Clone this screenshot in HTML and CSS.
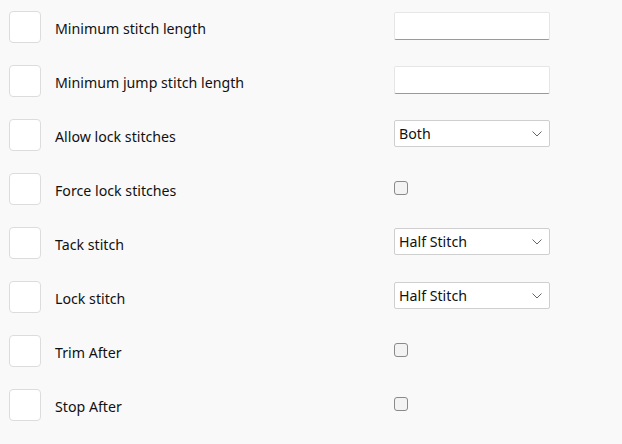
FILE: index.html
```html
<!DOCTYPE html>
<html>
<head>
<meta charset="utf-8">
<link rel="stylesheet" href="styles.css">
</head>
<body>
<div class="form">
  <div class="row">
    <span class="swatch"></span><span class="label">Minimum stitch length</span>
    <span class="field"></span>
  </div>
  <div class="row">
    <span class="swatch"></span><span class="label">Minimum jump stitch length</span>
    <span class="field"></span>
  </div>
  <div class="row">
    <span class="swatch"></span><span class="label">Allow lock stitches</span>
    <span class="select"><span class="value">Both</span><svg class="chev" width="10" height="6" viewBox="0 0 10 6"><path d="M0.5 0.5 L5 5 L9.5 0.5" fill="none" stroke="#666" stroke-width="1"/></svg></span>
  </div>
  <div class="row">
    <span class="swatch"></span><span class="label">Force lock stitches</span>
    <span class="check"></span>
  </div>
  <div class="row">
    <span class="swatch"></span><span class="label">Tack stitch</span>
    <span class="select"><span class="value">Half Stitch</span><svg class="chev" width="10" height="6" viewBox="0 0 10 6"><path d="M0.5 0.5 L5 5 L9.5 0.5" fill="none" stroke="#666" stroke-width="1"/></svg></span>
  </div>
  <div class="row">
    <span class="swatch"></span><span class="label">Lock stitch</span>
    <span class="select"><span class="value">Half Stitch</span><svg class="chev" width="10" height="6" viewBox="0 0 10 6"><path d="M0.5 0.5 L5 5 L9.5 0.5" fill="none" stroke="#666" stroke-width="1"/></svg></span>
  </div>
  <div class="row">
    <span class="swatch"></span><span class="label">Trim After</span>
    <span class="check"></span>
  </div>
  <div class="row">
    <span class="swatch"></span><span class="label">Stop After</span>
    <span class="check"></span>
  </div>
</div>
</body>
</html>
```
FILE: styles.css
```css
html, body {
  margin: 0;
  background: #f9f9f9;
}
body {
  font-family: "Noto Sans", "Open Sans", sans-serif;
  font-size: 14.2px;
  color: #111;
  width: 622px;
  height: 444px;
  overflow: hidden;
}
.form {
  display: flex;
  flex-direction: column;
  gap: 22px;
  padding: 11px 0 0 9px;
}
.row {
  display: grid;
  grid-template-columns: 32px 325px 156px;
  column-gap: 14px;
  height: 32px;
  align-items: center;
}
.swatch {
  box-sizing: border-box;
  width: 32px;
  height: 32px;
  background: #fff;
  border: 1px solid #dcdcdc;
  border-radius: 4px;
}
.label {
  margin-top: 3px;
}
.field {
  align-self: start;
  margin-top: 1px;
  box-sizing: border-box;
  height: 28px;
  background: #fff;
  border: 1px solid #e6e6e6;
  border-bottom: 1px solid #9a9a9a;
  border-radius: 2px;
}
.select {
  align-self: start;
  margin-top: 1px;
  box-sizing: border-box;
  height: 27px;
  background: #fff;
  border: 1px solid #cfcfcf;
  border-radius: 2px;
  display: flex;
  align-items: center;
  justify-content: space-between;
  padding: 0 7px 0 4px;
}
.chev {
  display: block;
}
.check {
  justify-self: start;
  margin-top: -3px;
  box-sizing: border-box;
  width: 14px;
  height: 14px;
  background: #f3f3f3;
  border: 1px solid #8a8a8a;
  border-radius: 3px;
}
```
